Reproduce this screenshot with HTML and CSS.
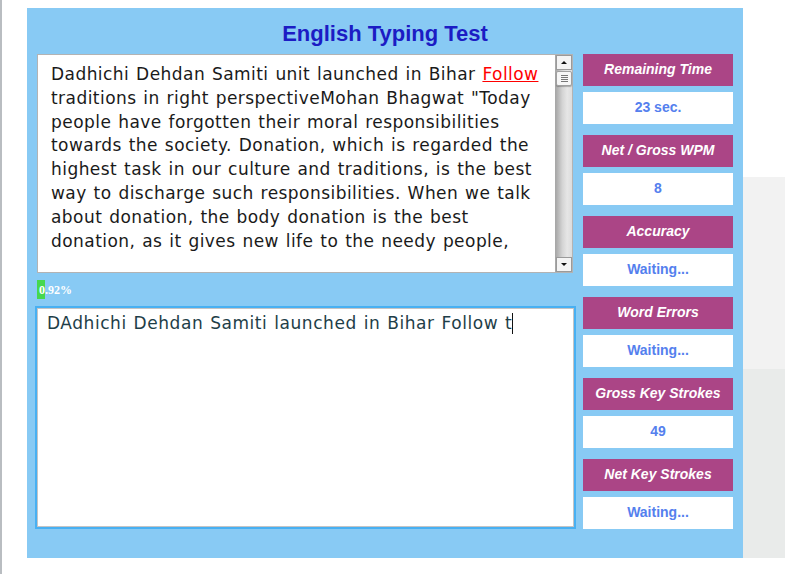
FILE: index.html
```html
<!DOCTYPE html>
<html>
<head>
<meta charset="utf-8">
<link rel="stylesheet" href="styles.css">
</head>
<body>
<div class="edge"></div>
<div class="panel">
  <h1 class="title">English Typing Test</h1>
  <div class="main">
    <div class="left">
      <div class="passage">
        <div class="passage-text">Dadhichi Dehdan Samiti unit launched in Bihar <span class="current">Follow</span> traditions in right perspectiveMohan Bhagwat "Today people have forgotten their moral responsibilities towards the society. Donation, which is regarded the highest task in our culture and traditions, is the best way to discharge such responsibilities. When we talk about donation, the body donation is the best donation, as it gives new life to the needy people,</div>
        <div class="scrollbar">
          <div class="sb-btn"><span class="arrow-up"></span></div>
          <div class="sb-thumb"><span class="grip"></span></div>
          <div class="sb-track"></div>
          <div class="sb-btn"><span class="arrow-down"></span></div>
        </div>
      </div>
      <div class="progress-row">
        <div class="progress-bar" style="width:8px"></div>
        <span class="progress-label">0.92%</span>
      </div>
      <div class="typing-box">
        <div class="typing-inner">DAdhichi Dehdan Samiti launched in Bihar Follow t<span class="caret"></span></div>
      </div>
    </div>
    <div class="stats">
      <div class="stat-label">Remaining Time</div>
      <div class="stat-value">23 sec.</div>
      <div class="stat-label">Net / Gross WPM</div>
      <div class="stat-value">8</div>
      <div class="stat-label">Accuracy</div>
      <div class="stat-value">Waiting...</div>
      <div class="stat-label">Word Errors</div>
      <div class="stat-value">Waiting...</div>
      <div class="stat-label">Gross Key Strokes</div>
      <div class="stat-value">49</div>
      <div class="stat-label">Net Key Strokes</div>
      <div class="stat-value">Waiting...</div>
    </div>
  </div>
</div>
<div class="side">
  <div class="side-a"></div>
  <div class="side-b"></div>
</div>
</body>
</html>
```
FILE: styles.css
```css
html, body {
  margin: 0;
  padding: 0;
  background: #ffffff;
}
body {
  display: flex;
  align-items: flex-start;
  height: 574px;
  overflow: hidden;
  font-family: "Liberation Sans", Arial, sans-serif;
}
.edge {
  width: 2px;
  height: 574px;
  background: #b9bdc1;
  flex: none;
}
.panel {
  flex: none;
  margin-left: 25px;
  margin-top: 8px;
  width: 716px;
  height: 550px;
  background: #88caf4;
  box-sizing: border-box;
  padding: 0 10px 0 10px;
}
.title {
  margin: 0;
  height: 46px;
  padding-top: 14px;
  box-sizing: border-box;
  text-align: center;
  font-size: 22px;
  line-height: 24px;
  font-weight: bold;
  color: #1c1cc4;
}
.main {
  display: flex;
  gap: 10px;
}
.left {
  width: 536px;
  flex: none;
}
.passage {
  height: 219px;
  box-sizing: border-box;
  border: 1px solid #b3b3b3;
  background: #fff;
  display: flex;
}
.passage-text {
  flex: 1;
  padding: 8px 8px 0 13px;
  font-family: "DejaVu Sans", Verdana, sans-serif;
  font-size: 17px;
  letter-spacing: 0.45px;
  word-spacing: 1px;
  line-height: 23.8px;
  color: #1a1a1a;
  overflow: hidden;
}
.current {
  color: #ff0000;
  text-decoration: underline;
}
.scrollbar {
  width: 16px;
  flex: none;
  display: flex;
  flex-direction: column;
  border-left: 1px solid #a8a8a8;
  background: linear-gradient(to right, #a9a9a9, #d4d4d4 40%, #e6e6e6 70%, #dcdcdc);
}
.sb-btn {
  height: 15px;
  background: #f4f4f4;
  border: 1px solid #9a9a9a;
  box-sizing: border-box;
  display: flex;
  align-items: center;
  justify-content: center;
}
.arrow-up {
  width: 0;
  height: 0;
  border-left: 3px solid transparent;
  border-right: 3px solid transparent;
  border-bottom: 3px solid #111;
}
.arrow-down {
  width: 0;
  height: 0;
  border-left: 3px solid transparent;
  border-right: 3px solid transparent;
  border-top: 3px solid #111;
}
.sb-thumb {
  height: 15px;
  margin-top: 1px;
  background: #f6f6f6;
  border: 1px solid #a0a0a0;
  border-radius: 2px;
  box-sizing: border-box;
  display: flex;
  align-items: center;
  justify-content: center;
  box-shadow: 0 1px 1px rgba(0,0,0,0.25);
}
.grip {
  width: 7px;
  height: 7px;
  background: repeating-linear-gradient(to bottom, #777 0, #777 1px, transparent 1px, transparent 2px);
}
.sb-track {
  flex: 1;
}
.progress-row {
  height: 33px;
  display: flex;
  align-items: center;
  position: relative;
}
.progress-bar {
  height: 19px;
  background: #46d84e;
  margin-top: 0;
}
.progress-label {
  position: absolute;
  left: 2px;
  top: 10px;
  font-family: "Liberation Serif", "Times New Roman", serif;
  font-weight: bold;
  font-size: 12px;
  color: #ffffff;
}
.typing-box {
  margin: 0 -3px 0 -2px;
  height: 223px;
  box-sizing: border-box;
  border: 2px solid #48b0f2;
  background: #fff;
}
.typing-inner {
  height: 100%;
  box-sizing: border-box;
  border: 1px solid #c4c4c4;
  padding: 3px 9px;
  font-family: "DejaVu Sans", Verdana, sans-serif;
  font-size: 17px;
  letter-spacing: 0.55px;
  word-spacing: 1px;
  line-height: 22px;
  color: #1e3e48;
}
.caret {
  display: inline-block;
  width: 1px;
  height: 21px;
  background: #111;
  vertical-align: -5px;
}
.stats {
  width: 150px;
  flex: none;
  display: flex;
  flex-direction: column;
}
.stat-label {
  height: 32px;
  background: #ab4586;
  color: #ffffff;
  font-weight: bold;
  font-style: italic;
  font-size: 14px;
  display: flex;
  align-items: center;
  justify-content: center;
  padding-bottom: 2px;
  box-sizing: border-box;
  margin-bottom: 6px;
}
.stat-value {
  height: 32px;
  background: #ffffff;
  color: #5480ee;
  font-weight: bold;
  font-size: 14px;
  display: flex;
  align-items: center;
  justify-content: center;
  padding-bottom: 2px;
  box-sizing: border-box;
  margin-bottom: 11px;
}
.side {
  flex: none;
  width: 42px;
  margin-top: 177px;
  display: flex;
  flex-direction: column;
}
.side-a {
  height: 192px;
  background: #f2f2f2;
}
.side-b {
  height: 189px;
  background: #e9ebea;
}
```
